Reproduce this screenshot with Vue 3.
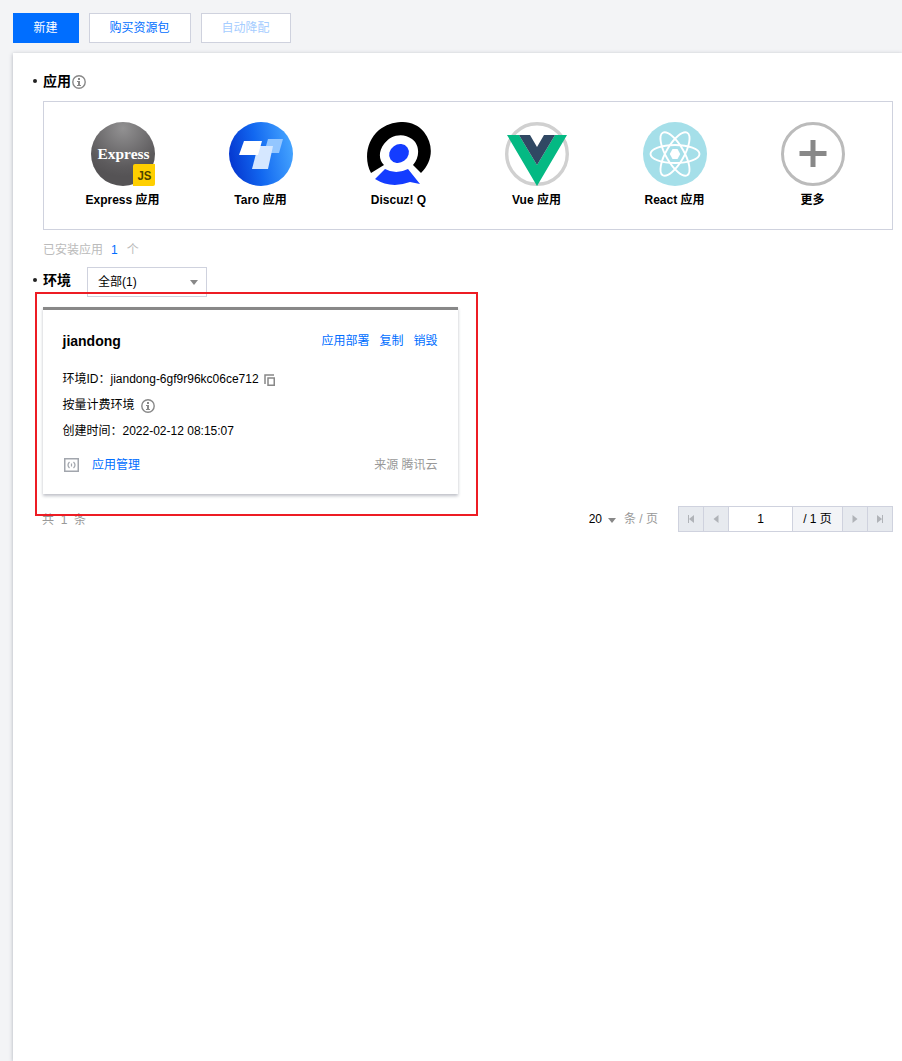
<script setup>
const apps = [
  { id: 'express', name: 'Express 应用' },
  { id: 'taro', name: 'Taro 应用' },
  { id: 'discuz', name: 'Discuz! Q' },
  { id: 'vue', name: 'Vue 应用' },
  { id: 'react', name: 'React 应用' },
  { id: 'more', name: '更多' },
]
</script>

<template>
  <div class="page">
    <div class="toolbar">
      <button class="btn primary">新建</button>
      <button class="btn buy">购买资源包</button>
      <button class="btn disabled">自动降配</button>
    </div>

    <main class="panel">
      <h2 class="title"><i class="dot"></i><span>应用</span>
        <svg class="info" viewBox="0 0 14 14" width="14" height="14"><circle cx="7" cy="7" r="6.2" fill="none" stroke="#888" stroke-width="1.4" /><path d="M6 3h2v2H6zM5 6h3v4h1v1H5v-1h1V7H5z" fill="#888" /></svg>
      </h2>

      <section class="apps">
        <div v-for="app in apps" :key="app.id" class="app">
          <svg v-if="app.id === 'express'" width="64" height="64" viewBox="0 0 64 64">
            <defs><radialGradient id="eg" cx="0.5" cy="0.1" r="0.75"><stop offset="0" stop-color="#929192" /><stop offset="0.8" stop-color="#5d5b5d" /><stop offset="1" stop-color="#555355" /></radialGradient></defs>
            <circle cx="32" cy="32" r="32" fill="url(#eg)" />
            <text x="32.5" y="37" text-anchor="middle" class="serif" textLength="52" lengthAdjust="spacingAndGlyphs">Express</text>
            <path d="M42 44q0-2 2-2h20v20q0 2-2 2H42z" fill="#ffcf00" />
            <text x="46.500" y="58" class="js" textLength="14" lengthAdjust="spacingAndGlyphs">JS</text>
          </svg>
          <svg v-else-if="app.id === 'taro'" width="64" height="64" viewBox="0 0 64 64">
            <defs><linearGradient id="tg" x1="0" y1="0.6" x2="1" y2="0.4"><stop offset="0" stop-color="#0536cf" /><stop offset="0.45" stop-color="#1268f0" /><stop offset="1" stop-color="#45a4ff" /></linearGradient></defs>
            <circle cx="32" cy="32" r="32" fill="url(#tg)" />
            <path d="M39 17h15l-4 14H35z" fill="#93c6ff" />
            <path d="M29 24h15l-5 23H23z" fill="#d5e7ff" />
            <path d="M15 19h18l-4 14H10z" fill="#fff" />
          </svg>
          <svg v-else-if="app.id === 'discuz'" width="64" height="64" viewBox="0 0 64 64">
            <path d="M4 51C-3 38-1 19 12 8C26-3 47-3 57 10C67 23 66 39 54 51L46 43C53 35 53 23 45 17C36 10 23 13 17 22C11 30 12 38 17 43Z" fill="#000" />
            <ellipse cx="32" cy="31.5" rx="10.3" ry="9" transform="rotate(-35 32 31.5)" fill="#143cff" />
            <path d="M18 47Q29 53 41 47L53 62L43 60Q24 67 8 57Z" fill="#143cff" />
          </svg>
          <svg v-else-if="app.id === 'vue'" width="64" height="64" viewBox="0 0 64 64">
            <circle cx="32" cy="32" r="30.3" fill="none" stroke="#d0d0d0" stroke-width="3.4" />
            <path d="M2 13h12l18 30 18-30h12L32 64z" fill="#04b983" />
            <path d="M14 13h11l7 12 7-12h11L32 43z" fill="#304863" />
          </svg>
          <svg v-else-if="app.id === 'react'" width="64" height="64" viewBox="0 0 64 64">
            <circle cx="32" cy="32" r="32" fill="#a5dfe9" />
            <g fill="none" stroke="#fff" stroke-width="1.9">
              <ellipse cx="32" cy="32" rx="24.5" ry="9" />
              <ellipse cx="32" cy="32" rx="24.5" ry="9" transform="rotate(60 32 32)" />
              <ellipse cx="32" cy="32" rx="24.5" ry="9" transform="rotate(120 32 32)" />
            </g>
            <path d="M29.500 27h5l2.700 5-2.700 5h-5l-2.700-5z" fill="#fff" />
          </svg>
          <svg v-else width="64" height="64" viewBox="0 0 64 64">
            <circle cx="32" cy="32" r="30.5" fill="#fff" stroke="#bbb" stroke-width="3" />
            <path d="M32 18v27M18.500 31.500h27" stroke="#888" stroke-width="5" fill="none" />
          </svg>
          <span class="app-name">{{ app.name }}</span>
        </div>
      </section>

      <p class="installed">已安装应用<b>1</b>个</p>

      <div class="env-head">
        <h2 class="title"><i class="dot"></i><span>环境</span></h2>
        <div class="select">全部(1)<i class="caret"></i></div>
      </div>

      <section class="env">
        <article class="card">
          <header class="row">
            <h3>jiandong</h3>
            <nav><a>应用部署</a><a>复制</a><a>销毁</a></nav>
          </header>
          <div class="details">
            <p>环境ID：jiandong-6gf9r96kc06ce712
              <svg class="copy" width="12" height="12" viewBox="0 0 12 12"><path d="M1 10V1H10M4 4h6.250v7.250H4z" fill="none" stroke="#888" stroke-width="1.5" /></svg>
            </p>
            <p>按量计费环境
              <svg class="bill" viewBox="0 0 14 14" width="14" height="14"><circle cx="7" cy="7" r="6.2" fill="none" stroke="#888" stroke-width="1.4" /><path d="M6 3h2v2H6zM5 6h3v4h1v1H5v-1h1V7H5z" fill="#888" /></svg>
            </p>
            <p>创建时间：2022-02-12 08:15:07</p>
          </div>
          <footer class="row foot">
            <span class="manage">
              <svg width="15" height="14" viewBox="0 0 15 14"><path d="M.75.75h13.500v12.500H.75z" fill="none" stroke="#a2a6ad" stroke-width="1.5" /><path d="M5.500 4Q2.500 7 5.500 10M9.500 4Q12.500 7 9.500 10M7.500 5.500v3" fill="none" stroke="#a2a6ad" stroke-width="1.2" /></svg>
              <a>应用管理</a>
            </span>
            <span class="source">来源 腾讯云</span>
          </footer>
        </article>
        <div class="highlight"></div>
      </section>

      <div class="pagination">
        <span class="total">共&nbsp; 1&nbsp; 条</span>
        <div class="pager">
          <span class="size">20</span><i class="caret"></i><span class="unit">条 / 页</span>
          <div class="pages">
            <span class="step"><svg width="8" height="8" viewBox="0 0 8 8"><path d="M1 0h1v8H1zM7 0v8L2 4z" /></svg></span>
            <span class="step"><svg width="8" height="8" viewBox="0 0 8 8"><path d="M6.500 0v8L1.500 4z" /></svg></span>
            <span class="current">1</span>
            <span class="count">/ 1 页</span>
            <span class="step"><svg width="8" height="8" viewBox="0 0 8 8"><path d="M1.500 0v8l5-4z" /></svg></span>
            <span class="step"><svg width="8" height="8" viewBox="0 0 8 8"><path d="M1 0v8l5-4zM6 0h1v8H6z" /></svg></span>
          </div>
        </div>
      </div>
    </main>
  </div>
</template>

<style>
body { margin: 0; background: #f3f4f6; }
</style>

<style scoped>
* { box-sizing: border-box; }
.page { width: 902px; height: 1061px; padding: 13px 0 0 13px; overflow: hidden; display: flex; flex-direction: column; font: 12px/18px "Liberation Sans", "Noto Sans CJK SC", sans-serif; color: #000; background: #f3f4f6; }
.toolbar { display: flex; gap: 10px; height: 30px; margin-bottom: 10px; }
.btn { width: 66px; height: 30px; padding: 0 1px 1px 0; border: 1px solid #cfd2de; border-radius: 0; background: #fff; font: inherit; color: #006eff; }
.btn.primary { background: #006eff; border-color: #006eff; color: #fff; }
.btn.buy { width: 102px; }
.btn.disabled { width: 90px; color: #a6cdff; }
.panel { flex: 1; background: #fff; padding: 18px 9px 0 20px; box-shadow: 0 1px 4px rgba(54, 58, 80, .36); }
.title { display: flex; align-items: center; height: 20px; margin: 0; font-size: 14px; line-height: 20px; font-weight: 700; }
.dot { width: 4px; height: 4px; margin: 0 6px 0 0; border-radius: 50%; background: #222; }
.info { margin: 2px 0 0 1px; }
.apps { margin: 10px 0 0 10px; height: 129px; padding: 20px 10px 0; border: 1px solid #cfd2de; display: flex; }
.app { width: 138px; display: flex; flex-direction: column; align-items: center; }
.app svg { display: block; }
.app-name { margin: 5px 1px 0 0; font-weight: 700; line-height: 18px; }
.serif { font: 700 15px "Liberation Serif", serif; fill: #fff; }
.js { font: 700 13px "Liberation Sans", sans-serif; fill: #4d4400; }
.installed { margin: 11px 0 0 10px; height: 18px; color: #bbb; }
.installed b { margin: 0 9px 0 8px; font-weight: 400; color: #006eff; }
.env-head { display: flex; margin-top: 8px; height: 30px; }
.env-head .title { margin-top: 3px; }
.select { width: 120px; height: 30px; margin-left: 16px; padding: 0 8px 0 10px; border: 1px solid #cfd2de; display: flex; align-items: center; justify-content: space-between; }
.caret { width: 0; height: 0; border: 4px solid transparent; border-top: 5px solid #888; border-bottom: 0; }
.env { position: relative; padding: 10px 0 0 10px; }
.card { width: 415px; height: 187px; padding: 22px 20.5px 0 19.5px; border-top: 3px solid #888; background: #fff; box-shadow: 0 2px 3px rgba(54, 58, 80, .32); }
.row { display: flex; justify-content: space-between; align-items: center; height: 18px; }
h3 { margin: 0; font-size: 14px; line-height: 18px; }
nav { display: flex; gap: 10px; }
a { color: #006eff; }
.details { margin-top: 16px; }
.details p { margin: 0; height: 26px; display: flex; align-items: center; white-space: nowrap; }
.copy { margin: 2px 0 0 5px; }
.bill { margin: 2px 0 0 6.5px; }
.foot { margin-top: 12px; }
.manage { display: flex; align-items: center; gap: 13px; padding-left: 1.5px; }
.source { color: #999; }
.highlight { position: absolute; left: 2px; top: -5px; width: 443px; height: 224px; border: 2px solid #ed1c24; pointer-events: none; }
.pagination { margin: 12px 0 0 9px; height: 26px; display: flex; align-items: center; justify-content: space-between; }
.total, .unit { color: #999; }
.total { padding-top: 2px; }
.pager { display: flex; align-items: center; }
.pager .caret { margin: 3px 8px 0 6px; }
.unit { margin-right: 20px; }
.pages { display: flex; width: 215px; height: 26px; border: 1px solid #cfd2de; line-height: 24px; text-align: center; }
.pages > span + span { border-left: 1px solid #cfd2de; }
.step { width: 25px; background: #e7eaef; display: flex; align-items: center; justify-content: center; }
.step:first-child { width: 24px; }
.step svg { fill: #b0b3b8; }
.current { flex: 1; }
.count { width: 50px; background: #f3f4f7; }
</style>
